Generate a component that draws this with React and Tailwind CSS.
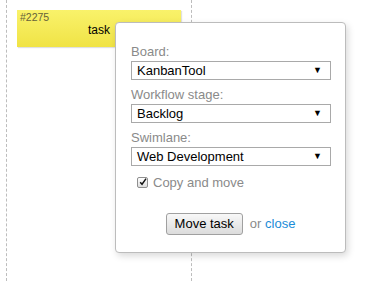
import React from 'react';

function Field({ label, value }) {
  return (
    <div className="flex flex-col">
      <label className="text-[13px] leading-[15px] text-[#8a8a8a]">{label}</label>
      <div className="mt-[2px] flex h-[19px] w-[200px] items-center justify-between border border-[#a9a9a9] bg-white pl-[5px] pr-[8px]">
        <span className="text-[13px] leading-[15px] text-black">{value}</span>
        <span className="text-[9px] leading-none text-black">▼</span>
      </div>
    </div>
  );
}

export default function App() {
  return (
    <div
      className="relative h-[281px] w-[372px] overflow-hidden bg-white"
      style={{ fontFamily: '"Liberation Sans", Arial, sans-serif' }}
    >
      <div className="flex h-full">
        <div className="ml-[6px] h-full w-[186px] border-x border-dashed border-[#bdbdbd] pl-[10px] pt-[10px]">
          <div className="h-[37px] w-[164px] bg-gradient-to-b from-[#f9f26a] to-[#f0e344] px-[3px] pt-[1px] shadow-[1px_1px_1px_rgba(0,0,0,0.12)]">
            <div className="text-[10.5px] leading-[12px] text-[#66623a]">#2275</div>
            <div className="text-center text-[12px] leading-[14px] text-black">task</div>
          </div>
        </div>
      </div>

      <div className="absolute left-[115px] top-[22px] flex h-[231px] w-[231px] flex-col rounded-[4px] border border-[#bcbcbc] bg-white px-[15px] pt-[21px] shadow-[2px_3px_7px_rgba(0,0,0,0.15)]">
        <div className="flex flex-col gap-[7px]">
          <Field label="Board:" value="KanbanTool" />
          <Field label="Workflow stage:" value="Backlog" />
          <Field label="Swimlane:" value="Web Development" />
        </div>
        <label className="ml-[6px] mt-[9px] flex items-center gap-[5px] text-[13px] leading-[15px] text-[#8a8a8a]">
          <span className="flex h-[11px] w-[11px] items-center justify-center rounded-[2px] border border-[#8f8f8f] bg-gradient-to-b from-white to-[#dedede]">
            <svg width="10" height="10" viewBox="0 0 10 10" className="-mt-[2px] ml-[1px]">
              <path d="M1.5 5.2 L3.8 7.8 L8.8 0.8" fill="none" stroke="#111" strokeWidth="1.8" />
            </svg>
          </span>
          Copy and move
        </label>
        <div className="mt-[23px] flex items-center justify-center gap-[7px] text-[13px]">
          <button className="h-[22px] rounded-[3px] border border-[#a0a0a0] bg-gradient-to-b from-[#f8f8f8] to-[#dcdcdc] px-[8px] text-[13px] text-black">
            Move task
          </button>
          <span className="text-[#8a8a8a]">
            or <a className="text-[#1b8cd8]">close</a>
          </span>
        </div>
      </div>
    </div>
  );
}
